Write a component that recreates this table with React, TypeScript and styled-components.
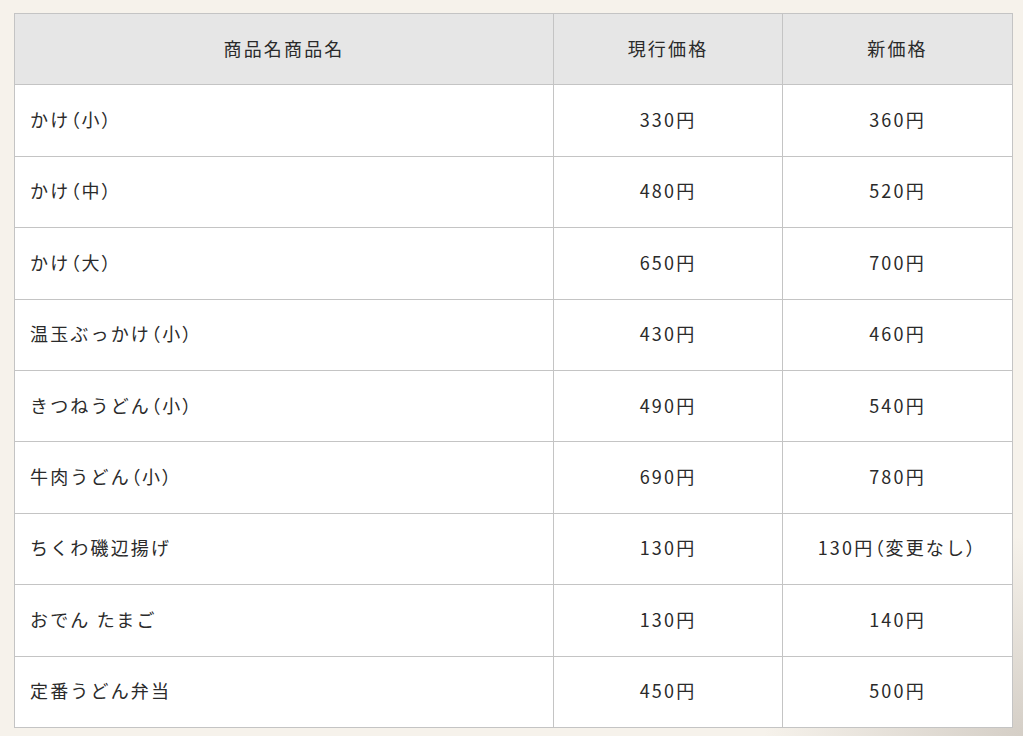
import { Fragment, ReactNode } from "react";
import styled, { createGlobalStyle } from "styled-components";

const GlobalStyle = createGlobalStyle`
    html, body {
        margin: 0;
        padding: 0;
        background: #f6f2eb;
    }
`;

type Item = { name: string; current: string; next: string };

const items: Item[] = [
    { name: "かけ（小）", current: "330円", next: "360円" },
    { name: "かけ（中）", current: "480円", next: "520円" },
    { name: "かけ（大）", current: "650円", next: "700円" },
    { name: "温玉ぶっかけ（小）", current: "430円", next: "460円" },
    { name: "きつねうどん（小）", current: "490円", next: "540円" },
    { name: "牛肉うどん（小）", current: "690円", next: "780円" },
    { name: "ちくわ磯辺揚げ", current: "130円", next: "130円（変更なし）" },
    { name: "おでん たまご", current: "130円", next: "140円" },
    { name: "定番うどん弁当", current: "450円", next: "500円" },
];

// full-width brackets are set tight (proportional), the rest stays monospaced
function withTightParens(text: string): ReactNode {
    return text.split(/([（）])/).map((part, i) =>
        part === "（" || part === "）"
            ? <Paren key={i}>{part}</Paren>
            : <Fragment key={i}>{part}</Fragment>
    );
}

export default function App() {
    return (
        <Page>
            <GlobalStyle />
            <Table>
                <colgroup>
                    <col style={{ width: 539 }} />
                    <col style={{ width: 229 }} />
                    <col />
                </colgroup>
                <thead>
                    <tr>
                        <HeadCell>商品名商品名</HeadCell>
                        <HeadCell>現行価格</HeadCell>
                        <HeadCell>新価格</HeadCell>
                    </tr>
                </thead>
                <tbody>
                    {items.map((item) => (
                        <tr key={item.name}>
                            <Cell $align="left">{withTightParens(item.name)}</Cell>
                            <Cell $align="center">{item.current}</Cell>
                            <Cell $align="center">{withTightParens(item.next)}</Cell>
                        </tr>
                    ))}
                </tbody>
            </Table>
        </Page>
    );
}

const Page = styled.div`
    min-height: 736px;
    box-sizing: border-box;
    padding: 13px 10px 8px 14px;
    background:
        radial-gradient(ellipse 260px 200px at 1023px 736px, rgba(150, 140, 130, 0.35), rgba(150, 140, 130, 0) 100%),
        #f6f2eb;
`;

const Table = styled.table`
    width: 999px;
    border-collapse: collapse;
    table-layout: fixed;
    background: #ffffff;
    font-family: "Noto Sans CJK JP", "Noto Sans", sans-serif;
    font-size: 18px;
    letter-spacing: 0.12em;
    color: #2a2a2a;
`;

const Paren = styled.span`
    font-feature-settings: "palt" 1;
`;

const HeadCell = styled.th`
    height: 67.4px;
    padding: 0 15px 3px;
    background: #e6e6e6;
    border: 1px solid #c4c4c4;
    font-weight: 400;
    text-align: center;
    vertical-align: middle;
`;

const Cell = styled.td<{ $align: "left" | "center" }>`
    height: 67.4px;
    padding: 0 15px 3px;
    border: 1px solid #c4c4c4;
    text-align: ${(p) => p.$align};
    vertical-align: middle;
`;
